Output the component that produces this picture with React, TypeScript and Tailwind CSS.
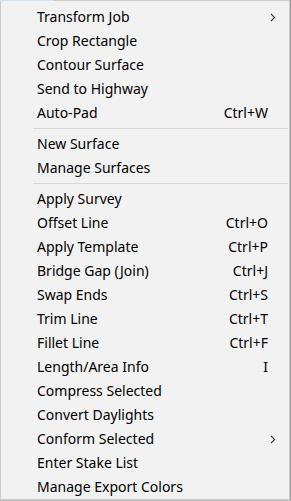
import React from "react";

type Item =
  | { sep: true }
  | { label: string; shortcut?: string; sub?: boolean; sep?: false };

const items: Item[] = [
  { label: "Transform Job", sub: true },
  { label: "Crop Rectangle" },
  { label: "Contour Surface" },
  { label: "Send to Highway" },
  { label: "Auto-Pad", shortcut: "Ctrl+W" },
  { sep: true },
  { label: "New Surface" },
  { label: "Manage Surfaces" },
  { sep: true },
  { label: "Apply Survey" },
  { label: "Offset Line", shortcut: "Ctrl+O" },
  { label: "Apply Template", shortcut: "Ctrl+P" },
  { label: "Bridge Gap (Join)", shortcut: "Ctrl+J" },
  { label: "Swap Ends", shortcut: "Ctrl+S" },
  { label: "Trim Line", shortcut: "Ctrl+T" },
  { label: "Fillet Line", shortcut: "Ctrl+F" },
  { label: "Length/Area Info", shortcut: "I" },
  { label: "Compress Selected" },
  { label: "Convert Daylights" },
  { label: "Conform Selected", sub: true },
  { label: "Enter Stake List" },
  { label: "Manage Export Colors" },
];

function Chevron() {
  return (
    <svg width="6" height="9" viewBox="0 0 6 9" className="block">
      <path d="M1 0.8 L4.6 4.5 L1 8.2" fill="none" stroke="#333" strokeWidth="1.1" />
    </svg>
  );
}

export default function App() {
  return (
    <div
      className="w-[291px] h-[501px] bg-[#f0f0f0] flex flex-col overflow-hidden"
      style={{ fontFamily: '"Noto Sans", "Segoe UI", sans-serif' }}
    >
      <div className="flex flex-1">
        <div className="w-[290px] flex flex-col">
          <div className="h-[1px] flex">
            <div className="w-[53px] bg-[#cce4f7]" />
            <div className="flex-1 bg-[#cccccc]" />
          </div>
          <div className="flex-1 bg-[#f2f2f2] border-l border-r border-b border-[#cccccc] pt-[4px] flex flex-col">
            {items.map((it, i) =>
              "label" in it ? (
                <div
                  key={i}
                  className="h-[24px] flex items-center pl-[36px] pr-[21px] text-[14px] text-black leading-none relative"
                >
                  <span className="flex-1 whitespace-nowrap">{it.label}</span>
                  {it.shortcut && <span className="whitespace-nowrap">{it.shortcut}</span>}
                  {it.sub && (
                    <span className="absolute right-[13px] top-[8px]">
                      <Chevron />
                    </span>
                  )}
                </div>
              ) : (
                <div key={i} className="h-[7px] flex items-center pl-[32px] pr-[1px]">
                  <div className="h-[1px] w-full bg-[#d7d7d7]" />
                </div>
              )
            )}
          </div>
        </div>
        <div className="w-[1px] bg-[#9a9a9a]" />
      </div>
      <div className="h-[1px] bg-[#bdbdbd]" />
    </div>
  );
}
